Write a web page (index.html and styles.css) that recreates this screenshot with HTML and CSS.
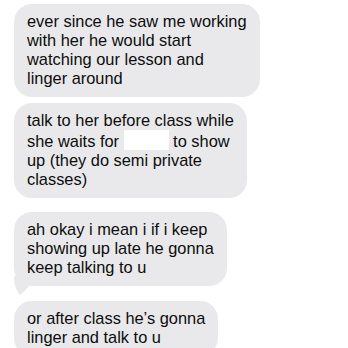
FILE: index.html
```html
<!DOCTYPE html>
<html>
<head>
<meta charset="utf-8">
<link rel="stylesheet" href="styles.css">
</head>
<body>
<div class="thread">
  <div class="bubble">ever since he saw me working<br>with her he would start<br>watching our lesson and<br>linger around</div>
  <div class="bubble">talk to her before class while<br>she waits for <span class="redact"></span> to show<br>up (they do semi private<br>classes)</div>
  <div class="bubble tail group-end">ah okay i mean i if i keep<br>showing up late he gonna<br>keep talking to u<svg class="tail-svg" width="20" height="20" viewBox="0 0 20 20"><path d="M0 0 L0 2 C0 10 3 15 6 19 C9 17 12 14 15 10 L20 10 L20 0 Z" fill="#e9e9eb"/></svg></div>
  <div class="bubble">or after class he’s gonna<br>linger and talk to u</div>
</div>
</body>
</html>
```
FILE: styles.css
```css
html, body {
  margin: 0;
  padding: 0;
  background: #ffffff;
  overflow: hidden;
}
.thread {
  display: flex;
  flex-direction: column;
  align-items: flex-start;
  gap: 6px;
  padding: 4px 0 0 14px;
}
.bubble {
  position: relative;
  background: #e9e9eb;
  color: #0d0d0d;
  font-family: "Liberation Sans", Arial, sans-serif;
  font-size: 16.4px;
  line-height: 19px;
  padding: 8px 13px 9px 13px;
  border-radius: 18px;
  white-space: nowrap;
}
.group-end {
  margin-top: 8px;
  margin-bottom: 9px;
}
.redact {
  display: inline-block;
  width: 45px;
  height: 20px;
  background: #ffffff;
  vertical-align: -3px;
}
.tail-svg {
  position: absolute;
  left: 0;
  bottom: -10px;
}
```
